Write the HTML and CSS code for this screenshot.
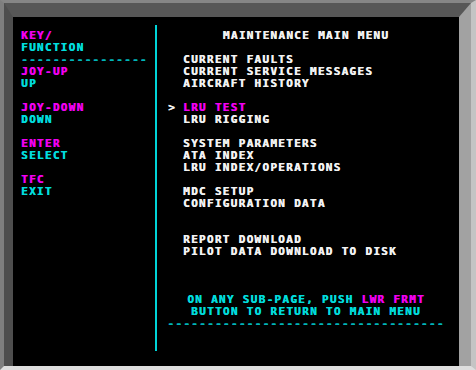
FILE: index.html
```html
<!DOCTYPE html>
<html lang="en">
<head>
    <meta charset="UTF-8">
    <meta name="viewport" content="width=device-width, initial-scale=1.0">
    <title>Maintenance Main Menu</title>
    <link rel="stylesheet" href="styles.css">
</head>
<body>
    <div class="bezel">
        <div class="frame">
            <div class="screen">
                <div class="keys">
                    <div class="magenta">KEY/</div>
                    <div class="cyan">FUNCTION</div>
                    <div class="cyan dashes">----------------</div>
                    <div class="group">
                        <div class="magenta">JOY-UP</div>
                        <div class="cyan">UP</div>
                    </div>
                    <div class="group">
                        <div class="magenta">JOY-DOWN</div>
                        <div class="cyan">DOWN</div>
                    </div>
                    <div class="group">
                        <div class="magenta">ENTER</div>
                        <div class="cyan">SELECT</div>
                    </div>
                    <div class="group">
                        <div class="magenta">TFC</div>
                        <div class="cyan">EXIT</div>
                    </div>
                </div>
                <div class="divider"></div>
                <div class="menu">
                    <div class="title">MAINTENANCE MAIN MENU</div>
                    <ul class="items">
                        <li>CURRENT FAULTS</li>
                        <li>CURRENT SERVICE MESSAGES</li>
                        <li class="gap">AIRCRAFT HISTORY</li>
                        <li class="selected"><span class="cursor">&gt;</span>LRU TEST</li>
                        <li class="gap">LRU RIGGING</li>
                        <li>SYSTEM PARAMETERS</li>
                        <li>ATA INDEX</li>
                        <li class="gap">LRU INDEX/OPERATIONS</li>
                        <li>MDC SETUP</li>
                        <li class="gap-2">CONFIGURATION DATA</li>
                        <li>REPORT DOWNLOAD</li>
                        <li>PILOT DATA DOWNLOAD TO DISK</li>
                    </ul>
                    <div class="note">
                        <div>ON ANY SUB-PAGE, PUSH <span class="magenta">LWR FRMT</span></div>
                        <div>BUTTON TO RETURN TO MAIN MENU</div>
                        <div class="dashes">-----------------------------------</div>
                    </div>
                </div>
            </div>
        </div>
    </div>
</body>
</html>
```

FILE: styles.css
```css
body {
    margin: 0;
    background-color: #dcdcdc;
}
.bezel {
    width: 476px;
    height: 370px;
    box-sizing: border-box;
    border-left: 4px solid #7f7f7f;
    border-top: 3px solid #868686;
    border-right: 5px solid #c4c4c4;
    border-bottom: 4px solid #dedede;
    background: #a0a0a0;
}
.frame {
    height: 100%;
    box-sizing: border-box;
    border-left: 9px solid #4e4e4e;
    border-top: 14px solid #575757;
    border-right: 12px solid #a2a2a2;
}
.screen {
    height: 100%;
    display: flex;
    padding-top: 8px;
    box-sizing: border-box;
    background: #000;
    font-family: "DejaVu Sans Mono", "Liberation Mono", monospace;
    font-weight: bold;
    font-size: 11px;
    line-height: 12px;
    letter-spacing: 1.3px;
    color: #f2f2f2;
    text-shadow: 0.5px 0 0 currentColor;
    white-space: nowrap;
}
.keys {
    width: 134px;
    padding: 5px 0 0 8px;
}
.group {
    margin-top: 12px;
}
.dashes + .group {
    margin-top: 0;
}
.divider {
    width: 2px;
    height: 326px;
    background: #00d4d8;
}
.menu {
    flex: 1;
    padding: 5px 4px 0 0;
}
.title {
    text-align: center;
    margin-bottom: 12px;
}
.items {
    list-style: none;
    margin: 0 0 36px 0;
    padding: 0 0 0 26px;
}
.items .gap {
    margin-bottom: 12px;
}
.items .gap-2 {
    margin-bottom: 24px;
}
.cursor {
    display: inline-block;
    width: 15px;
    margin-left: -15px;
    color: #f2f2f2;
}
.selected {
    color: #f000f0;
}
.note {
    text-align: center;
    color: #00dcdc;
}
.magenta {
    color: #f000f0;
}
.cyan {
    color: #00dcdc;
}
.dashes {
    color: #00b4b8;
}
```
